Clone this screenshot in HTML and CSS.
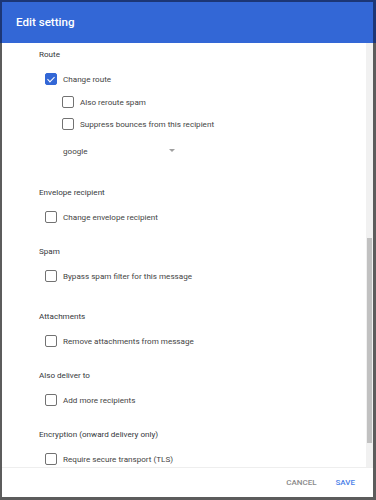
FILE: index.html
```html
<!DOCTYPE html>
<html lang="en">
<head>
    <meta charset="UTF-8">
    <meta name="viewport" content="width=device-width, initial-scale=1.0">
    <title>Edit setting</title>
    <link rel="stylesheet" href="styles.css">
</head>
<body>

<div class="dialog">
    <div class="dialog-header">Edit setting</div>

    <div class="dialog-body">
        <div class="dialog-content">
            <div class="section section-route">
                <div class="section-title">Route</div>
                <label class="option"><span class="box checked"></span>Change route</label>
                <div class="sub-options">
                    <label class="option"><span class="box"></span>Also reroute spam</label>
                    <label class="option option-tight"><span class="box"></span>Suppress bounces from this recipient</label>
                    <div class="select">
                        <span>google</span>
                        <span class="select-arrow"></span>
                    </div>
                </div>
            </div>

            <div class="section">
                <div class="section-title">Envelope recipient</div>
                <label class="option"><span class="box"></span>Change envelope recipient</label>
            </div>

            <div class="section section-loose">
                <div class="section-title">Spam</div>
                <label class="option"><span class="box"></span>Bypass spam filter for this message</label>
            </div>

            <div class="section">
                <div class="section-title">Attachments</div>
                <label class="option"><span class="box"></span>Remove attachments from message</label>
            </div>

            <div class="section">
                <div class="section-title">Also deliver to</div>
                <label class="option"><span class="box"></span>Add more recipients</label>
            </div>

            <div class="section">
                <div class="section-title">Encryption (onward delivery only)</div>
                <label class="option"><span class="box"></span>Require secure transport (TLS)</label>
            </div>
        </div>

        <div class="scrollbar">
            <div class="scrollbar-thumb"></div>
        </div>
    </div>

    <div class="dialog-footer">
        <button class="btn btn-cancel">CANCEL</button>
        <button class="btn btn-save">SAVE</button>
    </div>
</div>

</body>
</html>
```

FILE: styles.css
```css
body {
    margin: 0;
    padding: 2px 3px 3px 2px;
    height: 500px;
    box-sizing: border-box;
    font-family: Roboto, "Noto Sans", sans-serif;
    background: linear-gradient(#1c3676 0 43px, #5c5c5c 43px);
}
.dialog {
    background: white;
    height: 495px;
    display: flex;
    flex-direction: column;
}
.dialog-header {
    height: 41px;
    flex-shrink: 0;
    background: #3367d6;
    color: white;
    font-size: 11.6px;
    font-weight: 500;
    line-height: 41px;
    padding-left: 14px;
}
.dialog-body {
    display: flex;
    height: 425px;
    flex-shrink: 0;
    overflow: hidden;
    border-bottom: 1px solid #eeeeee;
    box-sizing: border-box;
}
.dialog-content {
    flex: 1;
    padding: 3px 0 0 37px;
}
.scrollbar {
    width: 7px;
    background: #f1f1f1;
}
.scrollbar-thumb {
    margin: 195px 1px 0 1px;
    height: 205px;
    background: #c1c1c1;
}
.section {
    margin-bottom: 18px;
}
.section-loose {
    margin-bottom: 24px;
}
.section-route {
    margin-bottom: 25px;
}
.section-title {
    font-size: 8.1px;
    line-height: 16px;
    color: #35383c;
}
.option {
    display: flex;
    align-items: center;
    height: 16px;
    margin-top: 9px;
    margin-left: 6px;
    font-size: 8.1px;
    color: #444;
}
.sub-options {
    margin-left: 17px;
}
.sub-options .option {
    margin-top: 7px;
}
.sub-options .option-tight {
    margin-top: 6px;
}
.box {
    width: 12px;
    height: 12px;
    box-sizing: border-box;
    border: 1.5px solid #727272;
    border-radius: 2px;
    margin-right: 6px;
    flex-shrink: 0;
    position: relative;
}
.box.checked {
    background: #3367d6;
    border-color: #3367d6;
}
.box.checked::after {
    content: "";
    position: absolute;
    left: 2.5px;
    top: 0.5px;
    width: 3px;
    height: 6px;
    border: solid white;
    border-width: 0 1.5px 1.5px 0;
    transform: rotate(45deg);
}
.select {
    display: flex;
    align-items: center;
    justify-content: space-between;
    width: 115px;
    height: 16px;
    margin-top: 11px;
    margin-left: 7px;
    font-size: 8.1px;
    color: #444;
}
.select-arrow {
    width: 0;
    height: 0;
    border-left: 3px solid transparent;
    border-right: 3px solid transparent;
    border-top: 3px solid #a0a0a0;
    margin-right: 3px;
    margin-top: -2px;
}
.dialog-footer {
    flex: 1;
    display: flex;
    justify-content: flex-end;
    align-items: center;
    gap: 19px;
    padding-right: 18px;
}
.btn {
    border: none;
    background: none;
    padding: 0;
    font-family: Roboto, sans-serif;
    font-size: 8px;
    font-weight: 500;
    cursor: pointer;
}
.btn-cancel {
    color: #8a8a8a;
}
.btn-save {
    color: #4a80e8;
}
```
